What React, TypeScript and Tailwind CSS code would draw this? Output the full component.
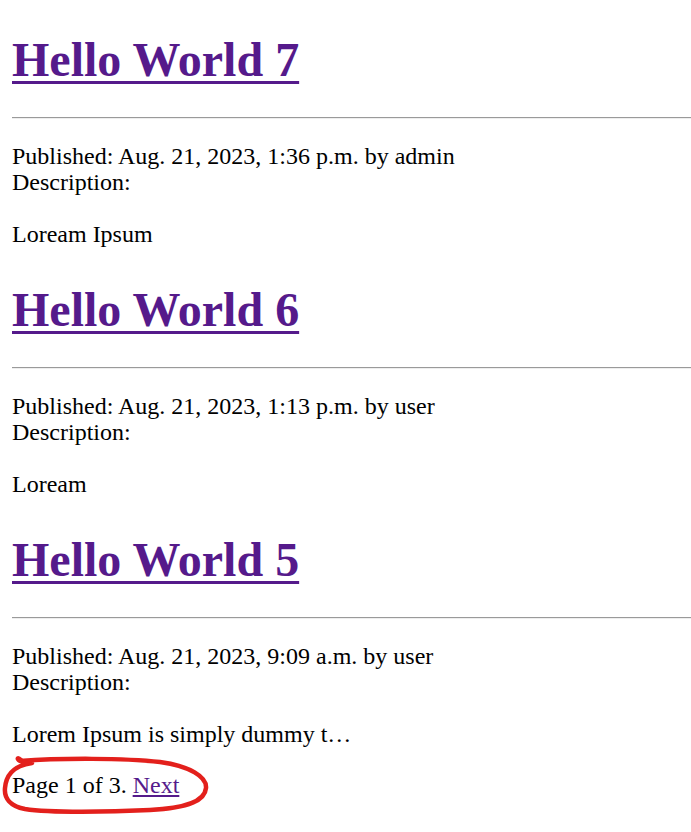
import React from 'react';

interface Post {
	title: string
	published: string
	author: string
	description: string
}

const posts: Post[] = [
	{ title: "Hello World 7", published: "Aug. 21, 2023, 1:36 p.m.", author: "admin", description: "Loream Ipsum" },
	{ title: "Hello World 6", published: "Aug. 21, 2023, 1:13 p.m.", author: "user", description: "Loream" },
	{ title: "Hello World 5", published: "Aug. 21, 2023, 9:09 a.m.", author: "user", description: "Lorem Ipsum is simply dummy t…" },
];

const PostItem: React.FC<{ post: Post, first: boolean }> = ({ post, first }) => {
	return (
		<div>
			<h1 className={(first ? "mt-[32px]" : "mt-[35px]") + " text-[48px] leading-[55px] font-bold"}>
				<a href="#" className="text-[#551a8b] underline decoration-[3px] underline-offset-[5px]">{post.title}</a>
			</h1>
			<hr className="mt-[30px] h-[2px] border-t border-b border-t-[#9a9a9a] border-b-[#eeeeee]" />
			<div className="mt-[24px]">
				Published: {post.published} by {post.author}
				<br />
				Description:
			</div>
			<p className="mt-[26px]">{post.description}</p>
		</div>
	)
}

const App: React.FC = () => {
	return (
		<div
			className="min-h-screen bg-white pl-[12px] text-black text-[24px] leading-[26px]"
			style={{ fontFamily: '"Liberation Serif", "Times New Roman", serif' }}
		>
			{posts.map((post, index) => <PostItem post={post} first={index === 0} key={index} />)}
			<div className="relative mt-[25px] w-fit">
				Page 1 of 3. <a href="#" className="text-[#551a8b] underline">Next</a>
				{/* hand drawn highlight */}
				<svg
					className="pointer-events-none absolute left-[-12px] top-[-21px]"
					width="215"
					height="72"
					viewBox="0 0 215 72"
					fill="none"
				>
					<path
						d="M21 9 C18 6 16 7 20 10 C60 7 125 7 160 11 C190 15 207 26 206 37 C205 49 190 57 150 59 C110 61 50 62 25 58 C10 55 4 47 5 37 C6 25 12 15 32 12"
						stroke="#e3201c"
						strokeWidth="4.5"
						strokeLinecap="round"
						strokeLinejoin="round"
					/>
				</svg>
			</div>
		</div>
	)
}
export default App;
